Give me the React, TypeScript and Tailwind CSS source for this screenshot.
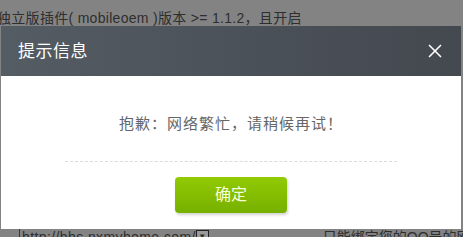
import { X } from "lucide-react";

const FONT = { fontFamily: '"Liberation Sans", "Noto Sans CJK SC", sans-serif' };

function PageBehind() {
  return (
    <div className="flex h-full flex-col justify-between">
      <div className="-ml-[3px] pt-[10px] text-[14px] leading-[16px] tracking-[0.3px] text-[#2e2e2e] whitespace-nowrap">
        独立版插件( mobileoem )版本 &gt;= 1.1.2，且开启
      </div>
      <div className="-mb-[8px] flex h-[16px] items-start text-[14px] leading-[16px] text-[#2e2e2e] whitespace-nowrap">
        <div className="ml-[19px] flex h-[18px] w-[199px] items-start border-l border-[#3a3a3a] pl-[2px]">
          <span className="flex-1 tracking-[0.4px]">http://bbs.nxmyhome.com/</span>
          <span className="mt-[1px] h-[14px] w-[13px] border border-[#222] bg-[#9a9a9a] text-center text-[8px] leading-[12px]">▼</span>
        </div>
        <span className="ml-[114px]">只能绑定您的QQ号的网站</span>
      </div>
    </div>
  );
}

function Dialog() {
  return (
    <div className="absolute left-[1px] top-[26px] flex h-[203px] w-[460px] flex-col bg-white">
      <div className="flex h-[50px] items-center justify-between bg-gradient-to-r from-[#545c64] to-[#44484f] pl-[17px] pr-[15px]">
        <span className="text-[17px] leading-none text-white tracking-[0.5px]">提示信息</span>
        <X className="h-[22px] w-[22px] text-white" strokeWidth={1.8} />
      </div>
      <div className="flex flex-1 flex-col items-center">
        <p className="pt-[40px] text-[15px] leading-[16px] tracking-[1px] text-[#666]">
          抱歉：网络繁忙，请稍候再试！
        </p>
        <div className="mt-[29px] w-[332px] border-t border-dashed border-[#dcdcdc]" />
        <button className="mt-[15px] h-[36px] w-[112px] rounded-[4px] bg-gradient-to-b from-[#92ca04] to-[#76b000] text-[16px] text-[#f6ffd8] shadow-[1px_2px_3px_rgba(0,0,0,0.18)]">
          确定
        </button>
      </div>
    </div>
  );
}

export default function App() {
  return (
    <div className="relative h-[237px] w-[463px] overflow-hidden bg-[#838383]" style={FONT}>
      <PageBehind />
      <Dialog />
    </div>
  );
}
